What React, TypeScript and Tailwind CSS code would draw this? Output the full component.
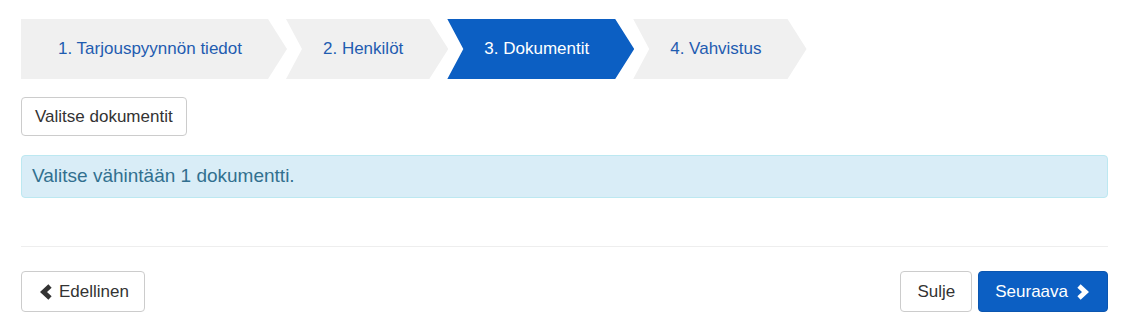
import React from "react";

const steps = [
  { label: "1. Tarjouspyynnön tiedot", active: false },
  { label: "2. Henkilöt", active: false },
  { label: "3. Dokumentit", active: true },
  { label: "4. Vahvistus", active: false },
];

function Chevron({ dir, className }: { dir: "left" | "right"; className?: string }) {
  return (
    <svg viewBox="0 0 12 16" className={className} aria-hidden="true">
      <polyline
        points={dir === "left" ? "10,2 3.5,8 10,14" : "2,2 8.5,8 2,14"}
        fill="none"
        stroke="currentColor"
        strokeWidth="4.8"
        strokeLinejoin="miter"
      />
    </svg>
  );
}

export default function App() {
  return (
    <div className="min-h-[335px] bg-white pl-[21px] pr-[18px] pt-[19px] font-['Liberation_Sans',Arial,sans-serif] text-[#333]">
      {/* wizard steps */}
      <div className="flex">
        {steps.map((s, i) => (
          <div
            key={s.label}
            className={`flex h-[60px] items-center pr-[45px] pl-[37px] text-[17px] ${
              i === 0
                ? "[clip-path:polygon(0_0,calc(100%_-_19px)_0,100%_50%,calc(100%_-_19px)_100%,0_100%)]"
                : "-ml-px [clip-path:polygon(0_0,calc(100%_-_19px)_0,100%_50%,calc(100%_-_19px)_100%,0_100%,16px_50%)]"
            } ${s.active ? "bg-[#0c5fc3] text-white" : "bg-[#f0f0f0] text-[#1f5cb0]"}`}
          >
            {s.label}
          </div>
        ))}
      </div>

      <button className="mt-[18px] h-[39px] rounded-[4px] border border-[#ccc] bg-white px-[13px] text-[17px] text-[#333]">
        Valitse dokumentit
      </button>

      <div className="mt-[19px] flex h-[43px] items-center rounded-[4px] border border-[#bce8f1] bg-[#d9edf7] pl-[10px] text-[19px] text-[#31708f]">
        Valitse vähintään 1 dokumentti.
      </div>

      <hr className="mt-[48px] border-t border-[#eeeeee]" />

      <div className="mt-[24px] flex items-center justify-between">
        <button className="flex h-[41px] items-center gap-[7px] rounded-[4px] border border-[#ccc] bg-white pl-[18px] pr-[15px] text-[17px] text-[#333]">
          <Chevron dir="left" className="h-[16px] w-[12px] text-[#333]" />
          Edellinen
        </button>
        <div className="flex gap-[6px]">
          <button className="h-[41px] rounded-[4px] border border-[#ccc] bg-white px-[16px] text-[17px] text-[#333]">
            Sulje
          </button>
          <button className="flex h-[41px] items-center gap-[9px] rounded-[4px] border border-[#0b56b0] bg-[#0c5fc3] pl-[16px] pr-[18px] text-[17px] text-white">
            Seuraava
            <Chevron dir="right" className="h-[16px] w-[12px] text-white" />
          </button>
        </div>
      </div>
    </div>
  );
}
